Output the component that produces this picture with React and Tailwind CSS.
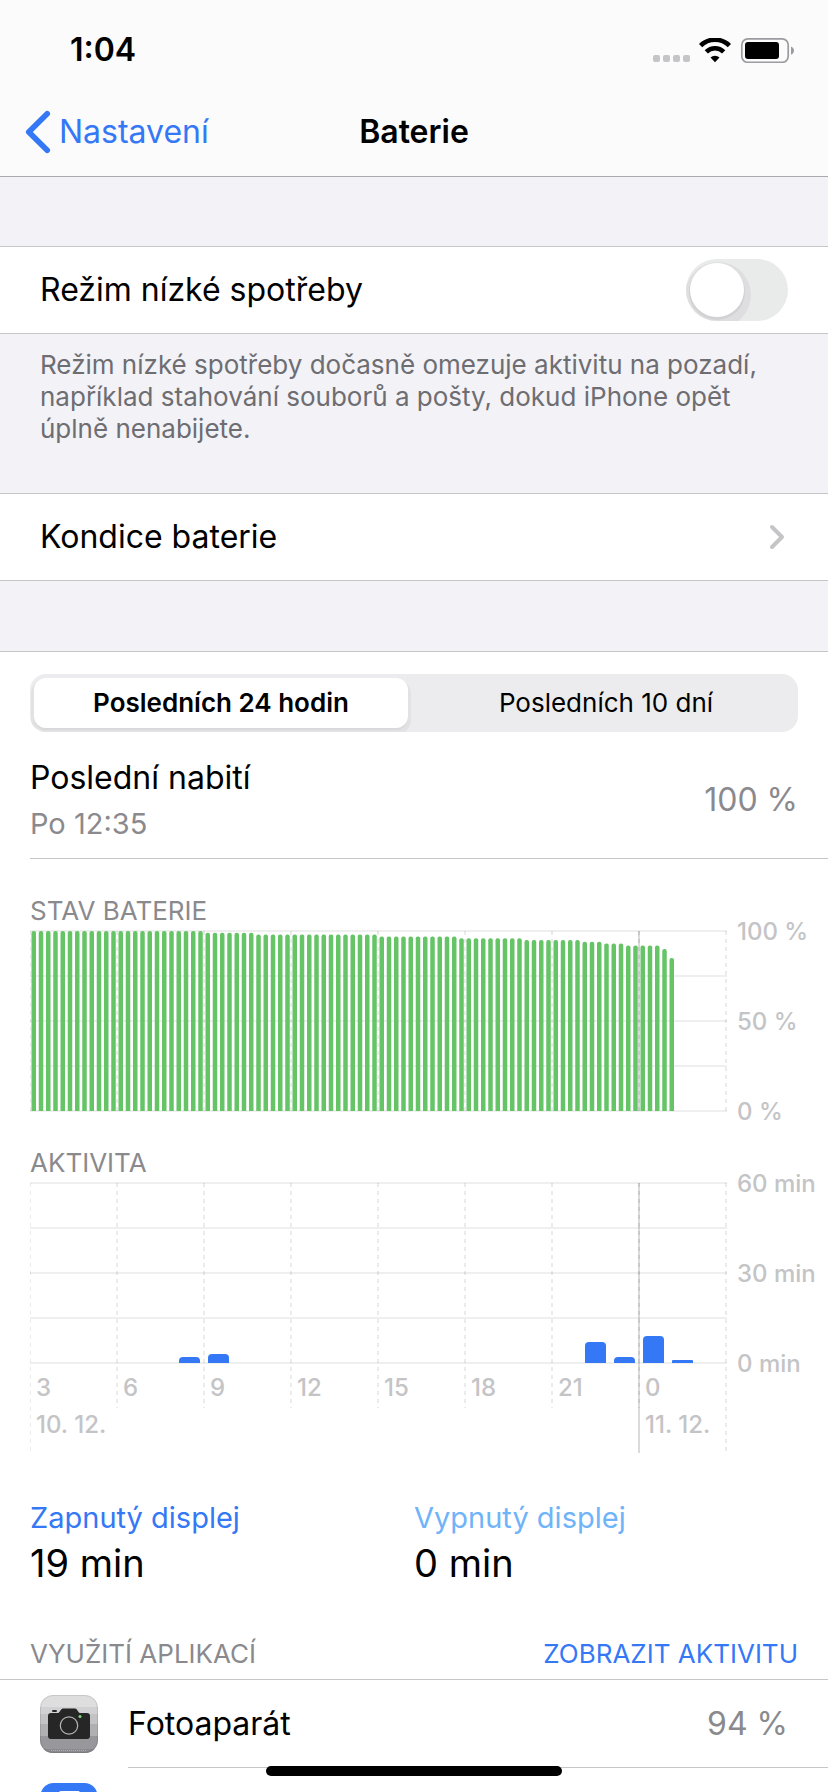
import { useState } from 'react'

const CHART_H = 180
const HOUR_W = 29

// [level in %, number of quarter hours]
const batteryRuns = [
  [100, 24],
  [99, 7],
  [98, 17],
  [97, 11],
  [96, 9],
  [95, 8],
  [94, 3],
  [93, 3],
  [92, 5],
  [90, 1],
  [85, 1],
]

const battery = batteryRuns.flatMap(([level, count]) => Array(count).fill(level))

const activity = [
  { slot: 5, min: 2 },
  { slot: 6, min: 3 },
  { slot: 19, min: 7 },
  { slot: 20, min: 2 },
  { slot: 21, min: 9 },
  { slot: 22, min: 1 },
]

const hours = ['3', '6', '9', '12', '15', '18', '21', '0']

// bar with only the top corners rounded, standing on the zero line
function barPath(x, w, h, r) {
  const base = CHART_H + 1
  const top = base - h
  return `M${x} ${base}V${top + r}a${r} ${r} 0 0 1 ${r} ${-r}h${w - 2 * r}a${r} ${r} 0 0 1 ${r} ${r}V${base}z`
}

function Grid({ labels, bottom, edgeBottom, midnightBottom }) {
  return (
    <>
      {[0, 1, 2, 3, 4].map((i) => (
        <rect key={i} x="0" y={i * 45} width="697" height="2" fill="#efeff0" />
      ))}
      {[0, 1, 2, 3, 4, 5, 6, 7, 8].map((i) => (
        <line
          key={i}
          x1={i === 0 ? 0.5 : i * 87}
          x2={i === 0 ? 0.5 : i * 87}
          y1="1"
          y2={i === 0 || i === 8 ? edgeBottom : bottom}
          stroke="#000"
          strokeOpacity="0.08"
          strokeWidth={i === 0 ? 1 : 2}
          strokeDasharray="4 4"
        />
      ))}
      <rect x="608" y="1" width="2" height={midnightBottom} fill="#000" fillOpacity="0.14" />
      {labels.map((label, i) => (
        <text key={label} x="707" y={10 + i * 90} fill="#c4c4c6" className="text-[24px] font-medium">
          {label}
        </text>
      ))}
    </>
  )
}

function BatteryChart() {
  return (
    <svg viewBox="0 0 798 182" className="block w-full h-auto overflow-visible" role="img" aria-label="Stav baterie">
      <Grid labels={['100 %', '50 %', '0 %']} bottom={181} edgeBottom={181} midnightBottom={180} />
      {battery.map((level, i) => (
        <path key={i} d={barPath(i * (HOUR_W / 4) + 1.5, 4.5, (level / 100) * CHART_H, 2)} fill="#65c466" />
      ))}
    </svg>
  )
}

function ActivityChart() {
  return (
    <svg viewBox="0 0 798 271" className="block w-full h-auto overflow-visible" role="img" aria-label="Aktivita">
      <Grid labels={['60 min', '30 min', '0 min']} bottom={226} edgeBottom={270} midnightBottom={270} />
      {activity.map(({ slot, min }) => (
        <path key={slot} d={barPath(slot * HOUR_W + 4, 21, min * 3, min > 1 ? 4 : 1)} fill="#3478f6" />
      ))}
      {hours.map((h, i) => (
        <text key={h} x={i * 87 + 6} y="214" fill="#c4c4c6" className="text-[24px] font-medium">
          {h}
        </text>
      ))}
      <text x="6" y="251" fill="#c4c4c6" className="text-[24px] font-medium">10. 12.</text>
      <text x="615" y="251" fill="#c4c4c6" className="text-[24px] font-medium">11. 12.</text>
    </svg>
  )
}

function StatusIcons() {
  return (
    <div className="flex items-end gap-2">
      <svg width="38" height="8" viewBox="0 0 38 8" fill="#c5c5c7">
        {[0, 10, 20, 30].map((x) => (
          <rect key={x} x={x} y="0" width="7" height="7" rx="2" />
        ))}
      </svg>
      <svg width="32" height="25" viewBox="0 0 32 25">
        <path d="M1.6 7.6a20.5 20.5 0 0 1 28.8 0" fill="none" stroke="#000" strokeWidth="4.6" />
        <path d="M7.3 13.8a12.4 12.4 0 0 1 17.4 0" fill="none" stroke="#000" strokeWidth="4.6" />
        <path d="M11.5 19.5a6.6 6.6 0 0 1 9 0L16 24.3z" />
      </svg>
      <svg width="55" height="25" viewBox="0 0 55 25">
        <rect x="2.8" y="0.9" width="46.4" height="23.4" rx="6" fill="none" stroke="#9c9ca0" strokeWidth="1.7" />
        <rect x="6" y="4" width="34" height="17" rx="3" />
        <path d="M52 8.5c4 1.4 4 6.8 0 8.2z" fill="#9c9ca0" />
      </svg>
    </div>
  )
}

function CameraIcon() {
  return (
    <svg width="58" height="58" viewBox="0 0 58 58" className="shrink-0">
      <defs>
        <clipPath id="camera-clip">
          <rect width="58" height="58" rx="13" />
        </clipPath>
      </defs>
      <g clipPath="url(#camera-clip)">
        <rect width="58" height="58" fill="#dededf" />
        <rect y="12" width="58" height="7" fill="#d1d1d3" />
        <rect y="19" width="58" height="10" fill="#c3c3c5" />
        <rect y="29" width="58" height="12" fill="#b0b0b3" />
        <rect y="41" width="58" height="17" fill="#98989c" />
        <rect y="54" width="58" height="4" fill="#8a8a8e" />
        <path d="M11 55.5h36" stroke="#b0b0b3" strokeWidth="1" strokeDasharray="1 1" />
      </g>
      <rect x="0.5" y="0.5" width="57" height="57" rx="12.5" fill="none" stroke="#000" strokeOpacity="0.1" />
      <rect x="12" y="15" width="5" height="2" rx="1" fill="#262626" />
      <path d="M11 18h7c2 0 2.500-4.500 5-4.500h12c2.500 0 3 4.500 5 4.500h7a3 3 0 0 1 3 3v20a3 3 0 0 1-3 3H11a3 3 0 0 1-3-3V21a3 3 0 0 1 3-3z" fill="#262626" />
      <circle cx="29" cy="30.500" r="8.700" fill="none" stroke="#b5b5b7" strokeWidth="1.200" />
      <circle cx="40" cy="21.500" r="1.500" fill="#7bd97c" />
    </svg>
  )
}

function BlueAppIcon() {
  return (
    <svg width="58" height="58" viewBox="0 0 58 58" className="shrink-0">
      <rect x="0.5" width="57" height="58" rx="13" fill="#3478f6" />
      <rect x="19" y="8" width="21" height="38" rx="2" fill="#fff" />
    </svg>
  )
}

export default function App() {
  const [lowPower, setLowPower] = useState(false)
  const [range, setRange] = useState('24h')

  const tabs = [
    { key: '24h', label: 'Posledních 24 hodin' },
    { key: '10d', label: 'Posledních 10 dní' },
  ]

  return (
    <div className="relative h-screen overflow-hidden bg-white font-['Inter','Liberation_Sans',sans-serif] text-black">
      <header className="bg-[#fbfbfc] border-b border-[#a9a9ae]">
        <div className="h-[88px] pt-3 pl-[70px] pr-[34px] flex items-center justify-between">
          <time className="text-[32px] leading-10 font-semibold">1:04</time>
          <StatusIcons />
        </div>
        <nav className="h-[88px] px-6 grid grid-cols-[1fr_auto_1fr] items-center text-[32px] leading-10">
          <a href="#nastaveni" className="flex items-center gap-[7px] text-[#3478f6]">
            <svg width="28" height="44" viewBox="0 0 28 44" fill="none" stroke="#3478f6" strokeWidth="5.7" strokeLinecap="round" strokeLinejoin="round">
              <path d="M23.200 3.800L4.800 22l18.400 18.200" />
            </svg>
            Nastavení
          </a>
          <h1 className="font-semibold">Baterie</h1>
        </nav>
      </header>

      <main className="bg-[#f2f2f7]">
        <section className="pt-[69px]">
          <div className="h-[88px] px-10 bg-white border-y border-[#c6c6c8] flex items-center justify-between">
            <label htmlFor="low-power" className="text-[32px] leading-10">Režim nízké spotřeby</label>
            <input
              id="low-power"
              type="checkbox"
              role="switch"
              checked={lowPower}
              onChange={(e) => setLowPower(e.target.checked)}
              className="appearance-none w-[102px] h-[62px] p-1 rounded-full overflow-hidden bg-[#e9ebea] checked:bg-[#65c466] before:block before:size-[54px] before:rounded-full before:bg-white before:shadow-[0_2px_0_1px_#d2d2d4,1px_5px_0_6px_#dedee0] checked:before:translate-x-10"
            />
          </div>
          <p className="pt-[15px] pb-12 pl-10 pr-16 text-[26px] leading-8 text-[#6d6d72]">
            Režim nízké spotřeby dočasně omezuje aktivitu na pozadí, například stahování souborů a pošty, dokud iPhone opět úplně nenabijete.
          </p>
        </section>

        <a href="#kondice" className="h-[88px] pl-10 pr-[43px] bg-white border-y border-[#c6c6c8] flex items-center justify-between text-[32px] leading-10">
          Kondice baterie
          <svg width="16" height="26" viewBox="0 0 16 26" fill="none" stroke="#c5c5c7" strokeWidth="4" strokeLinecap="round" strokeLinejoin="round">
            <path d="M3 3l10 10L3 23" />
          </svg>
        </a>

        <section className="mt-[70px] pt-[22px] bg-white border-t border-[#c6c6c8]">
          <div className="mx-[30px] h-[58px] grid grid-cols-2 rounded-2xl overflow-hidden bg-[#ececee] text-[26px] leading-8">
            {tabs.map(({ key, label }) => (
              <button
                key={key}
                type="button"
                aria-pressed={range === key}
                onClick={() => setRange(key)}
                className={
                  range === key
                    ? 'ml-1 mr-1.5 my-1 rounded-xl bg-white font-semibold shadow-[0_2px_0_0_#d9d9db,0_4px_0_3px_#e2e2e4]'
                    : 'rounded-xl'
                }
              >
                {label}
              </button>
            ))}
          </div>

          <div className="ml-[30px] pt-[26px] pb-4 pr-[30px] border-b border-[#c6c6c8] flex items-center justify-between">
            <div>
              <h2 className="text-[32px] leading-10">Poslední nabití</h2>
              <p className="mt-2 text-[29px] leading-9 text-[#8a8a8e]">Po 12:35</p>
            </div>
            <span className="text-[32px] leading-10 text-[#8a8a8e]">100 %</span>
          </div>

          <div className="pl-[30px] pt-9">
            <h3 className="mb-[3px] text-[26px] leading-8 text-[#8a8a8e]">STAV BATERIE</h3>
            <BatteryChart />
            <h3 className="mt-[35px] mb-[3px] text-[26px] leading-8 text-[#8a8a8e]">AKTIVITA</h3>
            <ActivityChart />
          </div>

          <dl className="mx-[30px] mt-[47px] grid grid-cols-2">
            <div>
              <dt className="text-[29px] leading-9 text-[#3478f6]">Zapnutý displej</dt>
              <dd className="mt-[5px] text-[38px] leading-11">19 min</dd>
            </div>
            <div>
              <dt className="text-[29px] leading-9 text-[#6fb3f8]">Vypnutý displej</dt>
              <dd className="mt-[5px] text-[38px] leading-11">0 min</dd>
            </div>
          </dl>

          <div className="mt-[53px] px-[30px] pb-[9px] border-b border-[#c6c6c8] flex justify-between text-[26px] leading-8">
            <h3 className="text-[#8a8a8e]">VYUŽITÍ APLIKACÍ</h3>
            <button type="button" className="text-[#3478f6]">ZOBRAZIT AKTIVITU</button>
          </div>
          <ul className="text-[32px] leading-10">
            <li className="pl-10 flex items-center gap-[30px]">
              <CameraIcon />
              <div className="h-[88px] flex-1 pr-10 border-b border-[#c6c6c8] flex items-center justify-between">
                <span>Fotoaparát</span>
                <span className="text-[#8a8a8e]">94 %</span>
              </div>
            </li>
            <li className="h-[88px] pl-10 flex items-center">
              <BlueAppIcon />
            </li>
          </ul>
        </section>
      </main>

      <div className="absolute bottom-4 left-1/2 -translate-x-1/2 w-[296px] h-2.5 rounded-full bg-black" />
    </div>
  )
}
